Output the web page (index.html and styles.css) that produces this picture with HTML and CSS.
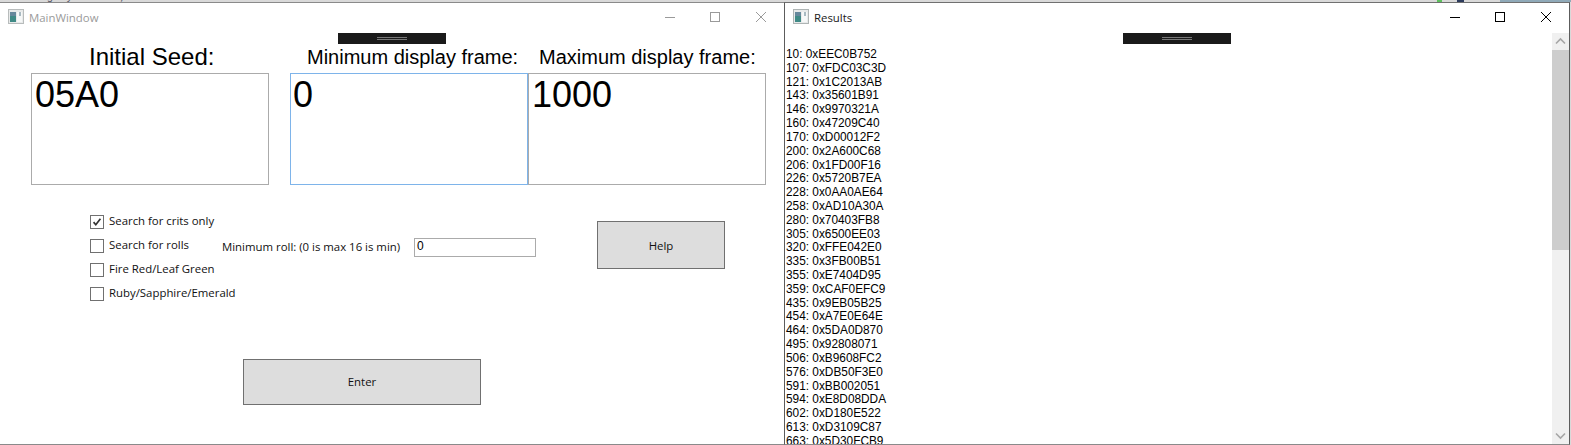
FILE: index.html
```html
<!DOCTYPE html>
<html lang="en">
<head>
<meta charset="utf-8">
<title>Windows</title>
<link rel="stylesheet" href="styles.css">
</head>
<body>
<div class="bg-strip"><span class="bg-green"></span><span class="bg-navy"></span><span class="bg-blue"></span></div>
<div class="bg-text">using System.IO;</div>
<section class="window main-window">
  <header class="titlebar inactive">
    <svg class="app-icon" viewBox="0 0 16 16"><rect x="0.5" y="0.5" width="15" height="14" fill="#e8eaea" stroke="#b8bcbc"/><rect x="2" y="3" width="6" height="10" fill="#3f8a86"/><rect x="2" y="3" width="6" height="4" fill="#66889c"/><rect x="9" y="3" width="5" height="10" fill="#f6f8f8"/><rect x="11" y="3" width="2" height="4" fill="#a9bac2"/></svg>
    <span class="title">MainWindow</span>
    <div class="controls">
      <svg class="ctl" viewBox="0 0 46 30"><path d="M19 14.500h10" stroke="#9a9a9a" fill="none"/></svg>
      <svg class="ctl" viewBox="0 0 46 30"><rect x="18.500" y="9.500" width="9" height="9" stroke="#9a9a9a" fill="none"/></svg>
      <svg class="ctl" viewBox="0 0 46 30"><path d="M18 9l10 10M28 9l-10 10" stroke="#9a9a9a" fill="none"/></svg>
    </div>
  </header>
  <div class="strip-row"><div class="debug-strip"><span class="grip"></span></div></div>
  <div class="labels">
    <div class="big-label seed-label">Initial Seed:</div>
    <div class="mid-label min-label">Minimum display frame:</div>
    <div class="mid-label max-label">Maximum display frame:</div>
  </div>
  <div class="fields">
    <div class="field seed-field">05A0</div>
    <div class="field min-field focus">0</div>
    <div class="field max-field">1000</div>
  </div>
  <div class="options">
    <div class="checks">
      <label class="check-row"><span class="box"><svg viewBox="0 0 14 14"><path d="M3 7.200l2.600 3L11 3.200" fill="none" stroke="#333" stroke-width="2"/></svg></span>Search for crits only</label>
      <div class="check-row"><span class="box"></span><span class="rolls-text">Search for rolls</span><span class="min-roll">Minimum roll: (0 is max 16 is min)</span><span class="roll-input">0</span></div>
      <label class="check-row"><span class="box"></span>Fire Red/Leaf Green</label>
      <label class="check-row"><span class="box"></span>Ruby/Sapphire/Emerald</label>
    </div>
    <div class="btn help-btn">Help</div>
  </div>
  <div class="btn enter-btn">Enter</div>
</section>
<section class="window results-window">
  <header class="titlebar">
    <svg class="app-icon" viewBox="0 0 16 16"><rect x="0.5" y="0.5" width="15" height="14" fill="#e8eaea" stroke="#aeb4b4"/><rect x="2" y="3" width="6" height="10" fill="#3f8a86"/><rect x="2" y="3" width="6" height="4" fill="#66889c"/><rect x="9" y="3" width="5" height="10" fill="#f6f8f8"/><rect x="11" y="3" width="2" height="4" fill="#a9bac2"/></svg>
    <span class="title">Results</span>
    <div class="controls">
      <svg class="ctl" viewBox="0 0 46 30"><path d="M19 14.500h10" stroke="#000" fill="none"/></svg>
      <svg class="ctl" viewBox="0 0 46 30"><rect x="18.500" y="9.500" width="9" height="9" stroke="#000" fill="none"/></svg>
      <svg class="ctl" viewBox="0 0 46 30"><path d="M18 9l10 10M28 9l-10 10" stroke="#000" fill="none"/></svg>
    </div>
  </header>
  <div class="results-body">
    <div class="results-content">
      <div class="strip-row results-strip"><div class="debug-strip"><span class="grip"></span></div></div>
      <pre class="results-list">10: 0xEEC0B752
107: 0xFDC03C3D
121: 0x1C2013AB
143: 0x35601B91
146: 0x9970321A
160: 0x47209C40
170: 0xD00012F2
200: 0x2A600C68
206: 0x1FD00F16
226: 0x5720B7EA
228: 0x0AA0AE64
258: 0xAD10A30A
280: 0x70403FB8
305: 0x6500EE03
320: 0xFFE042E0
335: 0x3FB00B51
355: 0xE7404D95
359: 0xCAF0EFC9
435: 0x9EB05B25
454: 0xA7E0E64E
464: 0x5DA0D870
495: 0x92808071
506: 0xB9608FC2
576: 0xDB50F3E0
591: 0xBB002051
594: 0xE8D08DDA
602: 0xD180E522
613: 0xD3109C87
663: 0x5D30FCB9</pre>
    </div>
    <div class="scrollbar">
      <div class="sb-arrow"><svg viewBox="0 0 17 17"><path d="M4 10.500l4.500-4.500 4.500 4.500" fill="none" stroke="#a6a6a6" stroke-width="1.600"/></svg></div>
      <div class="sb-thumb"></div>
      <div class="sb-track"></div>
      <div class="sb-arrow"><svg viewBox="0 0 17 17"><path d="M4 6.500l4.500 4.500 4.500-4.500" fill="none" stroke="#a6a6a6" stroke-width="1.600"/></svg></div>
    </div>
  </div>
</section>
</body>
</html>
```
FILE: styles.css
```css
* { box-sizing: border-box; }
html, body { margin: 0; padding: 0; }
body { position: relative; width: 1571px; height: 445px; overflow: hidden; background: #d9d9d9; font-family: "Liberation Sans", Arial, sans-serif; color: #000; }
.bg-strip { position: absolute; left: 0; top: 0; width: 100%; height: 2px; }
.bg-strip span { position: absolute; top: 0; height: 2px; }
.bg-green { left: 1437px; width: 5px; background: #5cc05c; }
.bg-navy { left: 1457px; width: 7px; background: #2c3a5c; }
.bg-blue { left: 1500px; width: 71px; background: #8fa9b8; }
.bg-text { position: absolute; left: 20px; top: -9px; font: 11px "Liberation Mono", monospace; color: #556; }
.window { position: absolute; top: 2px; background: #fff; overflow: hidden; display: flex; flex-direction: column; height: 443px; }
.main-window { left: 0; width: 784px; border-top: 1px solid #8a8a8a; border-bottom: 1px solid #8a8a8a; }
.results-window { left: 784px; width: 786px; border: 1px solid #5c5c5c; border-bottom-color: #8a8a8a; border-top-color: #707070; }
.titlebar { height: 30px; flex: none; display: flex; align-items: center; padding-left: 8px; font: 11.400px "Open Sans", "Noto Sans", sans-serif; }
.app-icon { width: 16px; height: 16px; flex: none; margin-bottom: 2px; }
.title { margin-left: 5px; margin-bottom: 2px; }
.inactive .title { color: #9a9a9a; }
.results-window .title { color: #1a1a1a; }
.controls { margin-left: auto; display: flex; }
.ctl { width: 46px; height: 30px; display: block; }
.strip-row { height: 11px; display: flex; justify-content: center; flex: none; }
.debug-strip { width: 108px; height: 11px; background: #1a1a1a; display: flex; align-items: center; justify-content: center; }
.grip { width: 30px; height: 3px; border-top: 1px solid #777; border-bottom: 1px solid #777; }
.labels { display: flex; height: 26px; margin-bottom: 3px; flex: none; align-items: center; }
.big-label { font-size: 24px; }
.mid-label { font-size: 20px; }
.seed-label { margin-left: 89px; width: 218px; }
.min-label { width: 232px; }
.fields { display: flex; margin-left: 31px; height: 112px; flex: none; }
.field { border: 1px solid #ababab; font-size: 36px; line-height: 41px; padding: 0 3px; height: 112px; width: 238px; }
.min-field { margin-left: 21px; padding-left: 2px; }
.focus { border-color: #7eb4ea; }
.options { display: flex; margin-left: 90px; margin-top: 29px; flex: none; height: 84px; }
.checks { width: 507px; margin-top: 1px; display: flex; flex-direction: column; gap: 10px; }
.check-row { display: flex; align-items: flex-start; height: 14px; font: 11.400px/12px "Open Sans", "Noto Sans", sans-serif; color: #111; }
.box { width: 14px; height: 14px; border: 1px solid #707070; background: #fff; margin-right: 5px; flex: none; display: block; }
.box svg { display: block; width: 12px; height: 12px; }
.rolls-text { width: 113px; }
.min-roll { width: 192px; margin-top: 2px; }
.roll-input { width: 122px; height: 19px; margin-top: -1px; border: 1px solid #ababab; padding-left: 2px; font: 12px/15px "Liberation Sans", sans-serif; color: #000; flex: none; }
.btn { background: #dddddd; border: 1px solid #707070; display: flex; align-items: center; justify-content: center; font: 11.400px "Open Sans", "Noto Sans", sans-serif; color: #111; flex: none; }
.help-btn { width: 128px; height: 48px; margin-top: 7px; }
.enter-btn { width: 238px; height: 46px; margin-left: 243px; margin-top: 61px; padding-bottom: 2px; }
.results-body { flex: 1; display: flex; min-height: 0; }
.results-content { flex: 1; min-width: 0; overflow: hidden; }
.results-strip { margin-left: 17px; }
.results-list { margin: 4px 0 0 0; padding: 0 0 0 1px; font: 11.850px/13.820px "Liberation Sans", sans-serif; }
.scrollbar { width: 17px; background: #f0f0f0; display: flex; flex-direction: column; }
.sb-arrow { height: 17px; flex: none; }
.sb-arrow svg { display: block; width: 17px; height: 17px; }
.sb-thumb { height: 200px; background: #cdcdcd; flex: none; }
.sb-track { flex: 1; }
```
